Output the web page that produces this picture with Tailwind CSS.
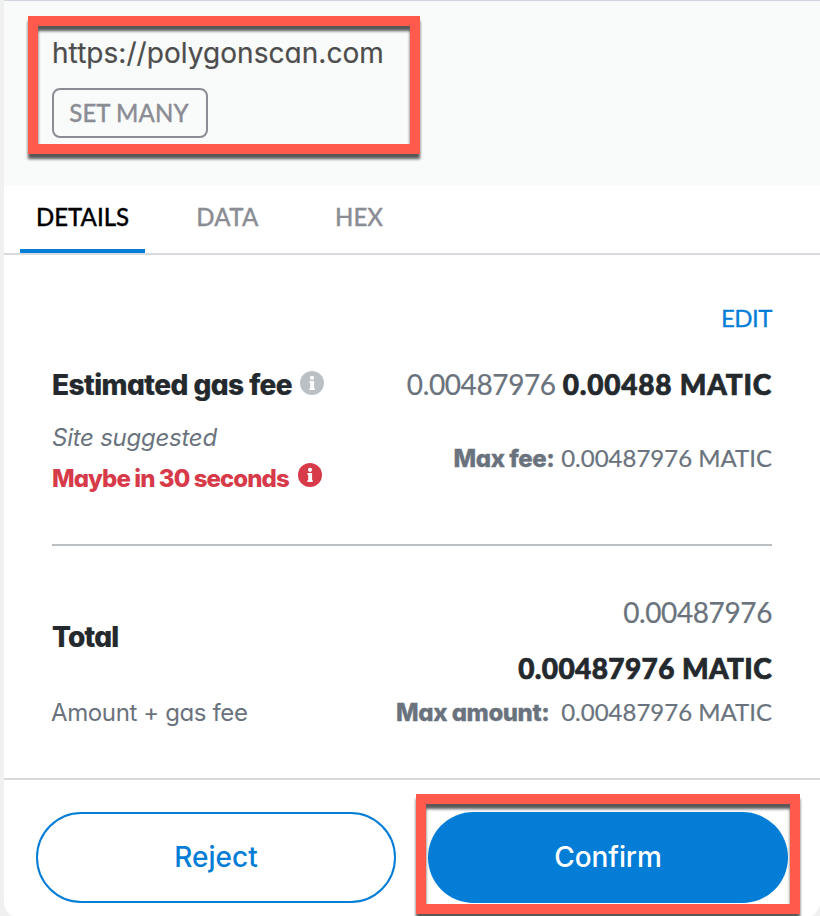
<!DOCTYPE html>
<html lang="en">
<head>
<meta charset="utf-8">
<title>Confirm transaction</title>
<script src="https://cdn.jsdelivr.net/npm/@tailwindcss/browser@4"></script>
</head>
<body class="relative h-[916px] w-[820px] overflow-hidden bg-[#f0f0f0] pl-1 font-['Inter',sans-serif] whitespace-nowrap [font-feature-settings:'cv11']">
  <main class="flex h-[918px] w-[816px] flex-col rounded-b-2xl bg-white">
    <header class="flex h-[186px] flex-col items-start border-t border-[#d2d5dd] bg-[#f9fbfa] pl-12">
      <h1 class="mt-[34px] text-[28px] leading-9 tracking-[0.05px] text-[#4d4d4d] [-webkit-text-stroke:0.2px]">https://polygonscan.com</h1>
      <button class="mt-[17px] h-[50px] w-[156px] rounded-lg border-2 border-[#8b8d95] pr-0.5 font-['Lato',sans-serif] text-[24px] font-medium tracking-[0.1px] text-[#8b8d95] [-webkit-text-stroke:0.3px]">SET MANY</button>
    </header>

    <nav class="flex h-[69px] shrink-0 border-b-2 border-[#d6d9e0] pl-4 font-['Lato',sans-serif] text-[24px] font-medium text-[#8b8d95] [-webkit-text-stroke:0.3px]">
      <div class="flex h-[67px] w-[125px] items-center justify-center border-b-4 border-[#037dd6] pb-0.5 text-black">DETAILS</div>
      <div class="flex h-[67px] w-[165px] items-center justify-center pb-1.5 tracking-[0.3px]">DATA</div>
      <div class="flex h-[67px] w-[98px] items-center justify-center pb-1.5">HEX</div>
    </nav>

    <section class="mx-12 h-[291px] shrink-0 border-b-2 border-[#bbc0c5] text-[#6a737d]">
      <div class="mt-[47px] text-right font-['Lato',sans-serif] text-[24px] leading-8 tracking-[-0.5px] text-[#037dd6] [-webkit-text-stroke:0.3px]">EDIT</div>
      <div class="mt-8 flex justify-between">
        <div>
          <div class="mt-px flex h-9 items-center text-[28px] font-extrabold leading-9 tracking-[-0.54px] text-[#24292e] [-webkit-text-stroke:0.2px]">
            <span>Estimated gas fee</span>
            <svg class="-mt-1 ml-2 size-6" viewBox="0 0 24 24"><circle cx="12" cy="12" r="12" fill="#bbc0c5"/><circle cx="12" cy="6.8" r="2.1" fill="#fff"/><path d="M9.4 10h4.7v7.2h.7V19H9.4v-1.8h.8v-5.4h-.8z" fill="#fff"/></svg>
          </div>
          <div class="mt-[19px] text-[24px] italic leading-8 tracking-[-0.25px]">Site suggested</div>
          <div class="mt-[9px] flex h-8 items-center text-[24px] font-extrabold leading-8 tracking-[-0.92px] text-[#d73a49]">
            <span>Maybe in 30 seconds</span>
            <svg class="-mt-2 ml-[9px] size-6" viewBox="0 0 24 24"><circle cx="12" cy="12" r="12" fill="#d73a49"/><circle cx="12" cy="6.8" r="2.1" fill="#fff"/><path d="M9.4 10h4.7v7.2h.7V19H9.4v-1.8h.8v-5.4h-.8z" fill="#fff"/></svg>
          </div>
        </div>
        <div class="flex flex-col items-end">
          <div class="flex items-center gap-[7px] font-['Lato',sans-serif] text-[28px] leading-9">
            <span class="tracking-[-0.39px] [-webkit-text-stroke:0.2px]">0.00487976</span>
            <span class="font-black tracking-[0.8px] text-[#24292e] [-webkit-text-stroke:0.7px]">0.00488 MATIC</span>
          </div>
          <div class="mt-10 flex gap-[7px] text-[24px] leading-8">
            <span class="mt-px font-extrabold tracking-[-0.45px] [-webkit-text-stroke:0.3px]">Max fee:</span>
            <span class="font-['Lato',sans-serif] [-webkit-text-stroke:0.2px]">0.00487976 MATIC</span>
          </div>
        </div>
      </div>
    </section>

    <section class="flex h-[234px] shrink-0 justify-between border-b-2 border-[#d6d9dc] px-12 text-[#6a737d]">
      <div>
        <div class="mt-[73px] text-[28px] font-extrabold leading-9 tracking-[-0.75px] text-[#24292e] [-webkit-text-stroke:0.2px]">Total</div>
        <div class="mt-[42px] -ml-px text-[24px] leading-8 tracking-[-0.38px]">Amount + gas fee</div>
      </div>
      <div class="flex flex-col items-end font-['Lato',sans-serif]">
        <div class="mt-12 text-[28px] leading-9 tracking-[-0.39px] [-webkit-text-stroke:0.2px]">0.00487976</div>
        <div class="mt-5 text-[28px] font-black leading-9 tracking-[0.39px] text-[#24292e] [-webkit-text-stroke:0.7px]">0.00487976 MATIC</div>
        <div class="mt-[10px] flex gap-3 text-[24px] leading-8">
          <span class="mt-px font-['Inter',sans-serif] font-extrabold tracking-[-0.45px] [-webkit-text-stroke:0.3px]">Max amount:</span>
          <span class="[-webkit-text-stroke:0.2px]">0.00487976 MATIC</span>
        </div>
      </div>
    </section>

    <footer class="flex gap-8 px-8 pt-8 text-[28px] font-medium">
      <button class="h-[91px] w-[360px] rounded-full border-2 border-[#037dd6] pb-px text-[#037dd6]">Reject</button>
      <button class="h-[91px] w-[360px] rounded-full bg-[#037dd6] pb-px tracking-[-0.1px] text-white">Confirm</button>
    </footer>
  </main>

  <div class="pointer-events-none absolute left-7 top-4 h-[138px] w-[392px] border-10 border-[#ff5a4c] [filter:drop-shadow(0_5px_1.6px_rgba(0,0,0,0.65))]"></div>
  <div class="pointer-events-none absolute left-[416px] top-[794px] h-[120px] w-[384px] border-10 border-[#ff5a4c] [filter:drop-shadow(0_5px_1.6px_rgba(0,0,0,0.65))]"></div>
</body>
</html>
